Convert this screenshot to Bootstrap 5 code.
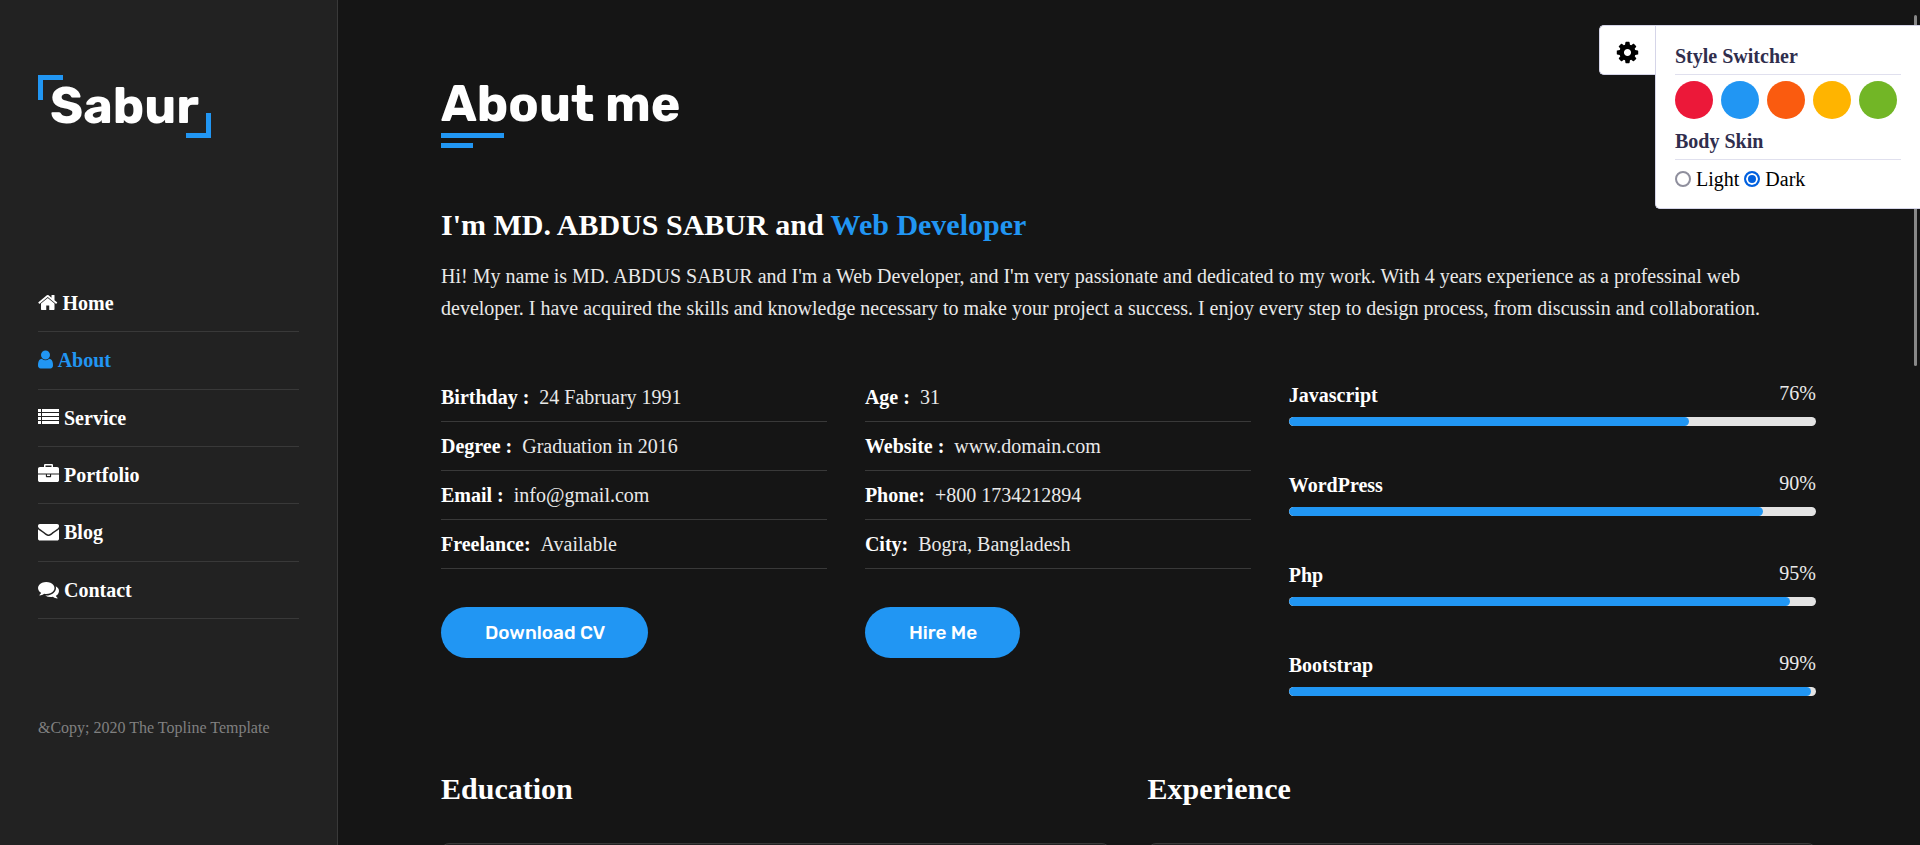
<!DOCTYPE html>
<html lang="en">
<head>
<meta charset="utf-8">
<meta name="viewport" content="width=device-width, initial-scale=1">
<title>Sabur - About me</title>
<link rel="stylesheet" href="https://cdn.jsdelivr.net/npm/bootstrap@5.3.0/dist/css/bootstrap.min.css">
<style>
:root { --skin: #2196f3; --line: #393939; }
body { background: #151515; color: #e9e9e9; font: 20px/32px "Liberation Serif", serif; }
h1, h2, h3, .logo, .pill { color: #fff; font-weight: 700; margin: 0; }
a { text-decoration: none; }

.sidebar { flex: 0 0 338px; background: #222; border-right: 1px solid var(--line); padding: 75px 38px 0; }
.logo { position: relative; display: block; width: 173px; height: 63px; padding-left: 12px; font: 700 50px/62px Rubik, Inter, sans-serif; color: #fff; }
.logo::before, .logo::after { content: ""; position: absolute; width: 25px; height: 25px; border: 0 solid var(--skin); }
.logo::before { left: 0; top: 0; border-width: 5px 0 0 5px; }
.logo::after { right: 0; bottom: 0; border-width: 0 5px 5px 0; }
.menu { display: grid; grid-auto-rows: 1fr; height: 344px; margin-top: 137px; }
.menu li { border-bottom: 1px solid var(--line); display: flex; align-items: center; }
.menu a { color: #fff; font-weight: 700; }
.menu a.active { color: var(--skin); }
.menu svg { height: 21px; vertical-align: -3px; fill: currentColor; }
.copy { margin-top: 93px; font-size: 16px; color: #808080; }

.content { padding: 73px 85px 0 84px; scrollbar-width: none; }
.content::-webkit-scrollbar { display: none; }
.content > .inner { padding: 0 19px; }
.title { font: 700 50px/62px Rubik, Inter, sans-serif; height: 60px; }
.bar-long, .bar-short { height: 5px; background: var(--skin); }
.bar-long { width: 63px; margin-bottom: 5px; }
.bar-short { width: 32px; }
h2, h3 { font-size: 30px; line-height: 36px; }
.intro { margin-top: 59px; }
.intro span { color: var(--skin); }
.lead-text { margin: 17px 0 49px; }
.row { --bs-gutter-x: 38px; }
.w-30 { width: 30%; }
.w-40 { width: 40%; }
.facts { margin: 0 0 38px; }
.facts > div { display: flex; gap: 10px; padding: 8px 0; border-bottom: 1px solid var(--line); }
.facts dt { color: #fff; }
.facts dd { margin: 0; }
.pill { background: var(--skin); border: 0; border-radius: 40px; padding: 12px 43px 12px 44px; font: 500 19px/27px Rubik, Inter, sans-serif; }
.skills { padding-top: 8px; }
.skill { margin-bottom: 45px; }
.skill-head { height: 36px; }
.skill-head label { color: #fff; font-weight: 700; line-height: 28px; }
.skill-head span { line-height: 24px; }
.progress { --bs-progress-height: 9px; --bs-progress-bg: #e3e3e3; --bs-progress-border-radius: 5px; --bs-progress-bar-bg: var(--skin); }
.progress-bar { border-radius: 5px; }
.history { margin-top: 30px; }
.timeline { margin-top: 36px; min-height: 160px; border: 1px solid var(--line); border-radius: 8px; background: #222; }

.scroll-thumb { position: fixed; right: 3px; top: 15px; width: 3px; height: 351px; background: #888; border-radius: 2px; }
.switcher { position: fixed; top: 25px; right: 0; color: #000; line-height: 24px; }
.gear { width: 56px; height: 50px; background: #fff; border: 1px solid #d5d5e8; border-right: 0; border-radius: 5px 0 0 5px; padding: 4px 0 0; }
.gear svg { width: 25px; height: 25px; fill: #000; }
.panel { width: 265px; background: #fff; border: 1px solid #d5d5e8; border-right: 0; border-radius: 0 0 0 5px; padding: 15px 19px 17px; }
.panel h4 { font-size: 20px; line-height: 30px; font-weight: 700; color: #302e4d; border-bottom: 1px solid #e0e0ee; padding-bottom: 3px; margin: 0; }
.swatches { display: flex; gap: 8px; padding: 6px 0 7px; }
.swatch { width: 38px; height: 38px; flex: none; border: 0; border-radius: 50%; padding: 0; }
.skin-radio { appearance: none; width: 16px; height: 16px; border: 2px solid #8f8f9d; border-radius: 50%; margin: 0; }
.skin-radio:checked { border-color: #0060df; background: #0060df; box-shadow: inset 0 0 0 2px #fff; }
.skins { gap: 5px; padding-top: 7px; }
</style>
</head>
<body>
<div class="d-flex vh-100 overflow-hidden">
  <aside class="sidebar">
    <a class="logo" href="#">Sabur</a>
    <nav>
      <ul class="menu list-unstyled mb-0">
        <li><a href="#home"><svg viewBox="64 0 1664 1792"><path d="M1472 992v480q0 26-19 45t-45 19h-384v-384h-256v384h-384q-26 0-45-19t-19-45v-480q0-1 .5-3t.5-3l575-474 575 474q1 2 1 6zm223-69l-62 74q-8 9-21 11h-3q-13 0-21-7l-692-577-692 577q-12 8-24 7-13-2-21-11l-62-74q-8-10-7-23.5t11-21.5l719-599q32-26 76-26t76 26l244 204v-195q0-14 9-23t23-9h192q14 0 23 9t9 23v408l219 182q10 8 11 21.5t-7 23.5z"/></svg> Home</a></li>
        <li><a href="#about" class="active"><svg viewBox="256 0 1344 1792"><path d="M1536 1399q0 109-62.5 187t-150.5 78h-854q-88 0-150.5-78t-62.5-187q0-85 8.5-160.5t31.5-152 58.5-131 94-89 134.5-34.5q131 128 313 128t313-128q76 0 134.5 34.5t94 89 58.5 131 31.5 152 8.5 160.5zm-256-887q0 159-112.5 271.5t-271.5 112.5-271.5-112.5-112.5-271.5 112.5-271.5 271.5-112.5 271.5 112.5 112.5 271.5z"/></svg> About</a></li>
        <li><a href="#service"><svg viewBox="0 0 21 21"><path d="M0 2h3v3H0zM4 2h17v3H4zM0 6h3v3H0zM4 6h17v3H4zM0 10h3v3H0zM4 10h17v3H4zM0 14h3v3H0zM4 14h17v3H4z"/></svg> Service</a></li>
        <li><a href="#portfolio"><svg viewBox="0 0 1792 1792"><path d="M640 256h512v-128h-512v128zm1152 640v480q0 66-47 113t-113 47h-1472q-66 0-113-47t-47-113v-480h672v160q0 26 19 45t45 19h320q26 0 45-19t19-45v-160h672zm-768 0v128h-256v-128h256zm768-480v384h-1792v-384q0-66 47-113t113-47h352v-160q0-40 28-68t68-28h576q40 0 68 28t28 68v160h352q66 0 113 47t47 113z"/></svg> Portfolio</a></li>
        <li><a href="#blog"><svg viewBox="0 0 1792 1792"><path d="M1792 710v794q0 66-47 113t-113 47h-1472q-66 0-113-47t-47-113v-794q44 49 101 87 362 246 497 345 57 42 92.500 65.500t94.500 48 110 24.500h2q51 0 110-24.500t94.500-48 92.500-65.500q170-123 498-345 57-39 100-87zm0-294q0 79-49 151t-122 123q-376 261-468 325-10 7-42.500 30.500t-54 38-52 32.500-57.500 27-50 9h-2q-23 0-50-9t-57.500-27-52-32.500-54-38-42.500-30.500q-91-64-262-182.500t-205-142.500q-62-42-117-115.500t-55-136.500q0-78 41.500-130t118.500-52h1472q65 0 112.500 47t47.500 113z"/></svg> Blog</a></li>
        <li><a href="#contact"><svg viewBox="0 0 1792 1792"><path d="M1408 768q0 139-94 257t-256.500 186.500-353.500 68.500q-86 0-176-16-124 88-278 128-36 9-86 16h-3q-11 0-20.500-8t-11.500-21q-1-3-1-6.500t.5-6.500 2-6l2.500-5 3.500-5.500 4-5 4.500-5 4-4.500q5-6 23-25t26-29.500 22.500-29 25-38.500 20.500-44q-124-72-195-177t-71-224q0-139 94-257t256.500-186.500 353.500-68.500 353.500 68.500 256.500 186.500 94 257zm384 256q0 120-71 224.500t-195 176.500q10 24 20.500 44t25 38.500 22.500 29 26 29.500 23 25q1 1 4 4.500t4.500 5 4 5 3.500 5.500l2.500 5 2 6 .5 6.500-1 6.500q-3 14-13 22t-22 7q-50-7-86-16-154-40-278-128-90 16-176 16-271 0-472-132 58 4 88 4 161 0 309-45t264-129q125-92 192-212t67-254q0-77-23-152 129 71 204 178t75 230z"/></svg> Contact</a></li>
      </ul>
    </nav>
    <p class="copy">&amp;Copy; 2020 The Topline Template</p>
  </aside>

  <main class="content flex-fill overflow-auto">
    <div class="inner">
      <h1 class="title">About me</h1>
      <div class="bar-long"></div>
      <div class="bar-short"></div>
      <h2 class="intro">I'm MD. ABDUS SABUR and <span>Web Developer</span></h2>
      <p class="lead-text">Hi! My name is MD. ABDUS SABUR and I'm a Web Developer, and I'm very passionate and dedicated to my work. With 4 years experience as a professinal web developer. I have acquired the skills and knowledge necessary to make your project a success. I enjoy every step to design process, from discussin and collaboration.</p>

      <div class="row">
        <div class="w-30">
          <dl class="facts">
            <div><dt>Birthday :</dt><dd>24 Fabruary 1991</dd></div>
            <div><dt>Degree :</dt><dd>Graduation in 2016</dd></div>
            <div><dt>Email :</dt><dd>info@gmail.com</dd></div>
            <div><dt>Freelance:</dt><dd>Available</dd></div>
          </dl>
          <button type="button" class="pill">Download CV</button>
        </div>
        <div class="w-30">
          <dl class="facts">
            <div><dt>Age :</dt><dd>31</dd></div>
            <div><dt>Website :</dt><dd>www.domain.com</dd></div>
            <div><dt>Phone:</dt><dd>+800 1734212894</dd></div>
            <div><dt>City:</dt><dd>Bogra, Bangladesh</dd></div>
          </dl>
          <button type="button" class="pill">Hire Me</button>
        </div>
        <div class="w-40 skills">
          <div class="skill">
            <div class="skill-head d-flex justify-content-between align-items-start"><label id="s1">Javascript</label><span>76%</span></div>
            <div class="progress" role="progressbar" aria-labelledby="s1" aria-valuenow="76"><div class="progress-bar" style="width:76%"></div></div>
          </div>
          <div class="skill">
            <div class="skill-head d-flex justify-content-between align-items-start"><label id="s2">WordPress</label><span>90%</span></div>
            <div class="progress" role="progressbar" aria-labelledby="s2" aria-valuenow="90"><div class="progress-bar" style="width:90%"></div></div>
          </div>
          <div class="skill">
            <div class="skill-head d-flex justify-content-between align-items-start"><label id="s3">Php</label><span>95%</span></div>
            <div class="progress" role="progressbar" aria-labelledby="s3" aria-valuenow="95"><div class="progress-bar" style="width:95%"></div></div>
          </div>
          <div class="skill">
            <div class="skill-head d-flex justify-content-between align-items-start"><label id="s4">Bootstrap</label><span>99%</span></div>
            <div class="progress" role="progressbar" aria-labelledby="s4" aria-valuenow="99"><div class="progress-bar" style="width:99%"></div></div>
          </div>
        </div>
      </div>

      <div class="row history">
        <section class="col-6"><h3>Education</h3><div class="timeline"></div></section>
        <section class="col-6"><h3>Experience</h3><div class="timeline"></div></section>
      </div>
    </div>
  </main>
</div>

<div class="scroll-thumb"></div>
<div class="switcher d-flex align-items-start">
  <button type="button" class="gear" aria-label="Settings"><svg viewBox="0 0 1792 1792"><path d="M1152 896q0-106-75-181t-181-75-181 75-75 181 75 181 181 75 181-75 75-181zm512-109v222q0 12-8 23t-20 13l-185 28q-19 54-39 91 35 50 107 138 10 12 10 25t-9 23q-27 37-99 108t-94 71q-12 0-26-9l-138-108q-44 23-91 38-16 136-29 186-7 28-36 28h-222q-14 0-24.500-8.500t-11.500-21.500l-28-184q-49-16-90-37l-141 107q-10 9-25 9-14 0-25-11-126-114-165-168-7-10-7-23 0-12 8-23 15-21 51-66.500t54-70.500q-27-50-41-99l-183-27q-13-2-21-12.500t-8-23.500v-222q0-12 8-23t19-13l186-28q14-46 39-92-40-57-107-138-10-12-10-24 0-10 9-23 26-36 98.500-107.500t94.500-71.500q13 0 26 10l138 107q44-23 91-38 16-136 29-186 7-28 36-28h222q14 0 24.500 8.500t11.500 21.500l28 184q49 16 90 37l142-107q9-9 24-9 13 0 25 10 129 119 165 170 7 8 7 22 0 12-8 23-15 21-51 66.500t-54 70.500q26 50 41 98l183 28q13 2 21 12.500t8 23.500z"/></svg></button>
  <div class="panel">
    <h4>Style Switcher</h4>
    <div class="swatches">
      <button type="button" class="swatch" aria-label="Red" style="background:#ec1839"></button>
      <button type="button" class="swatch" aria-label="Blue" style="background:#2196f3"></button>
      <button type="button" class="swatch" aria-label="Orange" style="background:#fa5b0f"></button>
      <button type="button" class="swatch" aria-label="Yellow" style="background:#ffb400"></button>
      <button type="button" class="swatch" aria-label="Green" style="background:#72b626"></button>
    </div>
    <h4>Body Skin</h4>
    <div class="skins d-flex align-items-center">
      <input class="skin-radio" type="radio" name="skin" id="light"><label for="light">Light</label>
      <input class="skin-radio" type="radio" name="skin" id="dark" checked><label for="dark">Dark</label>
    </div>
  </div>
</div>
<script src="https://cdn.jsdelivr.net/npm/bootstrap@5.3.0/dist/js/bootstrap.bundle.min.js"></script>
</body>
</html>
